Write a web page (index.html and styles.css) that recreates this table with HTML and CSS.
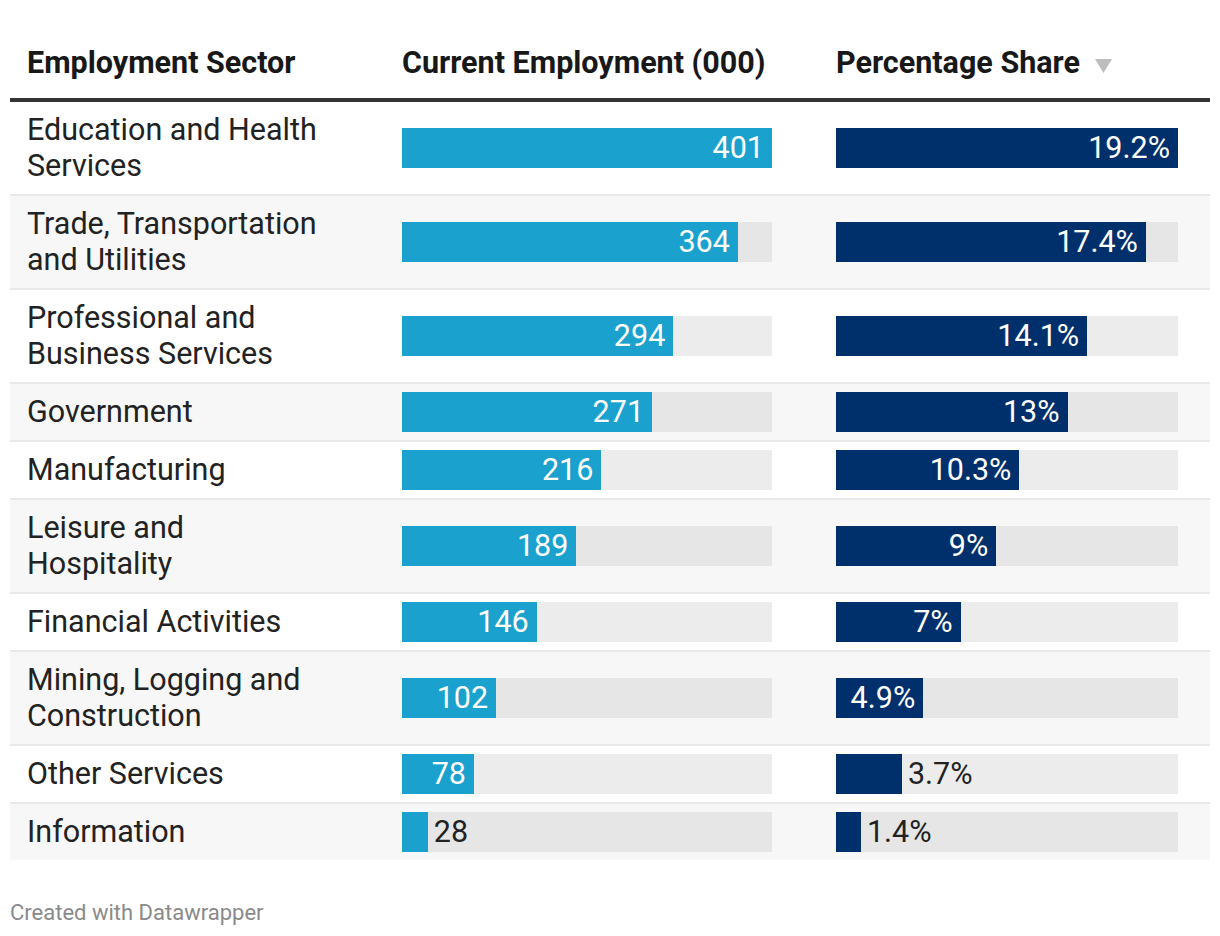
FILE: index.html
```html
<!DOCTYPE html>
<html lang="en">
<head>
<meta charset="utf-8">
<title>Employment by Sector</title>
<link rel="stylesheet" href="styles.css">
</head>
<body>
<div class="table">
  <div class="row head">
    <div class="cell name">Employment Sector</div>
    <div class="cell emp-col">Current Employment (000)</div>
    <div class="cell">Percentage Share <svg class="sort" width="17" height="14" viewBox="0 0 17 14"><polygon points="0,0 17,0 8.5,14" fill="#bdbdbd"/></svg></div>
  </div>

  <div class="row">
    <div class="cell name">Education and Health Services</div>
    <div class="cell emp-col"><div class="track"><div class="bar emp" style="width:100%"><span>401</span></div></div></div>
    <div class="cell"><div class="track"><div class="bar pct" style="width:100%"><span>19.2%</span></div></div></div>
  </div>
  <div class="row alt">
    <div class="cell name">Trade, Transportation and Utilities</div>
    <div class="cell emp-col"><div class="track"><div class="bar emp" style="width:90.77%"><span>364</span></div></div></div>
    <div class="cell"><div class="track"><div class="bar pct" style="width:90.63%"><span>17.4%</span></div></div></div>
  </div>
  <div class="row">
    <div class="cell name">Professional and Business Services</div>
    <div class="cell emp-col"><div class="track"><div class="bar emp" style="width:73.32%"><span>294</span></div></div></div>
    <div class="cell"><div class="track"><div class="bar pct" style="width:73.44%"><span>14.1%</span></div></div></div>
  </div>
  <div class="row alt">
    <div class="cell name">Government</div>
    <div class="cell emp-col"><div class="track"><div class="bar emp" style="width:67.58%"><span>271</span></div></div></div>
    <div class="cell"><div class="track"><div class="bar pct" style="width:67.71%"><span>13%</span></div></div></div>
  </div>
  <div class="row">
    <div class="cell name">Manufacturing</div>
    <div class="cell emp-col"><div class="track"><div class="bar emp" style="width:53.87%"><span>216</span></div></div></div>
    <div class="cell"><div class="track"><div class="bar pct" style="width:53.65%"><span>10.3%</span></div></div></div>
  </div>
  <div class="row alt">
    <div class="cell name">Leisure and Hospitality</div>
    <div class="cell emp-col"><div class="track"><div class="bar emp" style="width:47.13%"><span>189</span></div></div></div>
    <div class="cell"><div class="track"><div class="bar pct" style="width:46.88%"><span>9%</span></div></div></div>
  </div>
  <div class="row">
    <div class="cell name">Financial Activities</div>
    <div class="cell emp-col"><div class="track"><div class="bar emp" style="width:36.41%"><span>146</span></div></div></div>
    <div class="cell"><div class="track"><div class="bar pct" style="width:36.46%"><span>7%</span></div></div></div>
  </div>
  <div class="row alt">
    <div class="cell name">Mining, Logging and Construction</div>
    <div class="cell emp-col"><div class="track"><div class="bar emp" style="width:25.44%"><span>102</span></div></div></div>
    <div class="cell"><div class="track"><div class="bar pct" style="width:25.52%"><span>4.9%</span></div></div></div>
  </div>
  <div class="row">
    <div class="cell name">Other Services</div>
    <div class="cell emp-col"><div class="track"><div class="bar emp" style="width:19.45%"><span>78</span></div></div></div>
    <div class="cell"><div class="track"><div class="bar pct" style="width:19.27%"></div><span class="outside">3.7%</span></div></div>
  </div>
  <div class="row alt">
    <div class="cell name">Information</div>
    <div class="cell emp-col"><div class="track"><div class="bar emp" style="width:6.98%"></div><span class="outside">28</span></div></div>
    <div class="cell"><div class="track"><div class="bar pct" style="width:7.29%"></div><span class="outside">1.4%</span></div></div>
  </div>
</div>
<div class="footer">Created with Datawrapper</div>
</body>
</html>
```

FILE: styles.css
```css
html, body {
  margin: 0;
  padding: 0;
  background: #ffffff;
}

body {
  padding: 10px 10px 0 10px;
  font-family: Roboto, "Liberation Sans", Arial, sans-serif;
  color: #222222;
}

.table {
  width: 1200px;
}

.row {
  display: grid;
  grid-template-columns: 392px 434px 342px;
  align-items: center;
  padding: 10px 32px 10px 0;
  border-top: 2px solid #e9e9e9;
  font-size: 30.5px;
  line-height: 36px;
  background: #ffffff;
}

.row.alt {
  background: #f7f7f7;
}

.row.head {
  border-top: none;
  border-bottom: 4px solid #333333;
  padding: 35px 32px 17px 0;
  font-weight: 700;
  color: #181818;
}

.row.head + .row {
  border-top: none;
}

.cell {
  white-space: nowrap;
}

.cell.name {
  white-space: normal;
  padding-left: 17px;
  padding-right: 77px;
}

.cell.emp-col {
  padding-right: 64px;
}

.sort {
  margin-left: 7px;
  vertical-align: 0px;
}

.track {
  position: relative;
  display: flex;
  align-items: center;
  height: 40px;
  margin: -2px 0;
  background: #ececec;
}

.row.alt .track {
  background: #e6e6e6;
}

.bar {
  height: 40px;
  display: flex;
  justify-content: flex-end;
  align-items: center;
  flex: none;
  color: #ffffff;
}

.bar span {
  padding-right: 8px;
}

.bar.emp {
  background: #1aa1cd;
}

.bar.pct {
  background: #00306c;
}

.outside {
  padding-left: 6px;
  color: #222222;
}

.footer {
  margin-top: 41px;
  font-size: 22px;
  line-height: 24px;
  color: #8a8a8a;
}
```
